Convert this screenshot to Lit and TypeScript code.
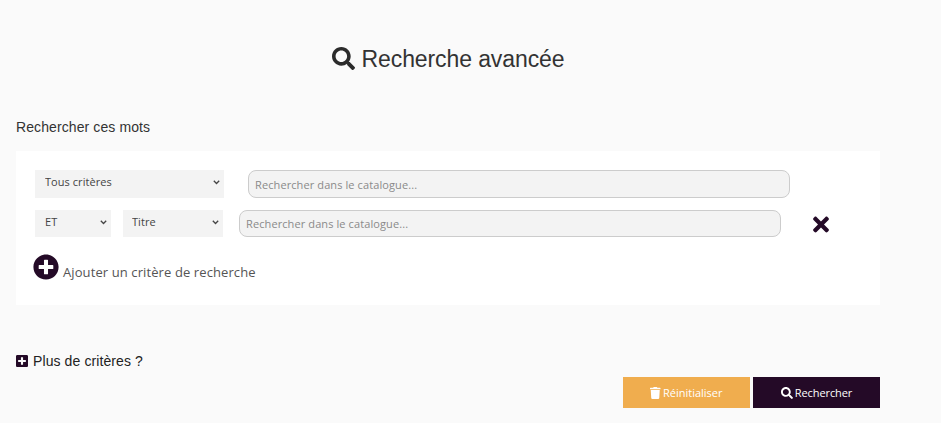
import { LitElement, html, css, svg } from "lit";
import { customElement } from "lit/decorators.js";

const SEARCH = "M505 442.7L405.3 343c-4.5-4.5-10.6-7-17-7H372c27.6-35.3 44-79.7 44-128C416 93.1 322.9 0 208 0S0 93.1 0 208s93.1 208 208 208c48.3 0 92.7-16.4 128-44v16.3c0 6.4 2.5 12.5 7 17l99.7 99.7c9.4 9.4 24.6 9.4 33.9 0l28.3-28.3c9.4-9.4 9.4-24.6.1-34zM208 336c-70.7 0-128-57.2-128-128 0-70.7 57.2-128 128-128 70.7 0 128 57.2 128 128 0 70.7-57.2 128-128 128z";
const TIMES = "M242.72 256l100.07-100.07c12.28-12.28 12.28-32.19 0-44.48l-22.24-22.24c-12.28-12.28-32.19-12.28-44.48 0L176 189.28 75.93 89.21c-12.28-12.28-32.19-12.28-44.48 0L9.21 111.45c-12.28 12.28-12.28 32.19 0 44.48L109.28 256 9.21 356.07c-12.28 12.28-12.28 32.19 0 44.48l22.24 22.24c12.28 12.28 32.2 12.28 44.48 0L176 322.72l100.07 100.07c12.28 12.28 32.2 12.28 44.48 0l22.24-22.24c12.28-12.28 12.28-32.19 0-44.48L242.72 256z";
const PLUS_CIRCLE = "M256 8C119 8 8 119 8 256s111 248 248 248 248-111 248-248S393 8 256 8zm144 276c0 6.6-5.4 12-12 12h-92v92c0 6.6-5.4 12-12 12h-56c-6.6 0-12-5.4-12-12v-92h-92c-6.6 0-12-5.4-12-12v-56c0-6.6 5.4-12 12-12h92v-92c0-6.6 5.4-12 12-12h56c6.6 0 12 5.4 12 12v92h92c6.6 0 12 5.4 12 12v56z";
const PLUS_SQUARE = "M400 32H48C21.5 32 0 53.5 0 80v352c0 26.5 21.5 48 48 48h352c26.5 0 48-21.5 48-48V80c0-26.5-21.5-48-48-48zm-32 252c0 6.6-5.4 12-12 12h-92v92c0 6.6-5.4 12-12 12h-56c-6.6 0-12-5.4-12-12v-92H92c-6.6 0-12-5.4-12-12v-56c0-6.6 5.4-12 12-12h92v-92c0-6.6 5.4-12 12-12h56c6.6 0 12 5.4 12 12v92h92c6.6 0 12 5.4 12 12v56z";
const TRASH = "M432 32H312l-9.4-18.7A24 24 0 0 0 281.1 0H166.8a23.72 23.72 0 0 0-21.4 13.3L136 32H16A16 16 0 0 0 0 48v32a16 16 0 0 0 16 16h416a16 16 0 0 0 16-16V48a16 16 0 0 0-16-16zM53.2 467a48 48 0 0 0 47.9 45h245.8a48 48 0 0 0 47.9-45L416 128H32z";

const icon = (d: string, w: number, cls: string) =>
  html`<svg class=${cls} viewBox="0 0 ${w} 512" aria-hidden="true">${svg`<path d=${d} fill="currentColor"></path>`}</svg>`;

const chevron = html`<svg class="chev" viewBox="0 0 7 5" aria-hidden="true">${svg`<path d="M.8.8 3.5 3.5 6.2.8" fill="none" stroke="currentColor" stroke-width="1.3"></path>`}</svg>`;

const dropdown = (label: string, cls: string) => html`
  <div class="sel ${cls}">
    <select><option>${label}</option></select>
    ${chevron}
  </div>
`;

@customElement("app-root")
export class AppRoot extends LitElement {
  static styles = css`
    :host {
      display: block;
      width: 941px;
      height: 423px;
      overflow: hidden;
      background: #fafafa;
      font-family: "Liberation Sans", Arial, sans-serif;
      color: #333;
      box-sizing: border-box;
    }
    .page {
      width: 864px;
      margin-left: 16px;
      padding-top: 41px;
      display: flex;
      flex-direction: column;
    }
    h1 {
      margin: 0;
      height: 36px;
      display: flex;
      align-items: center;
      justify-content: center;
      gap: 7px;
      font-size: 23px;
      letter-spacing: -0.1px;
      font-weight: 400;
      line-height: 36px;
      color: #333;
    }
    .h-icon {
      width: 23px;
      height: 23px;
      margin-top: -2px;
      color: #2b2b2b;
    }
    .label {
      margin-top: 40px;
      font-size: 14px;
      letter-spacing: 0.1px;
      line-height: 20px;
      color: #333;
    }
    .panel {
      margin-top: 14px;
      height: 154px;
      box-sizing: border-box;
      background: #fff;
      padding: 19px 0 0 19px;
      display: flex;
      flex-direction: column;
    }
    .row {
      display: flex;
      align-items: center;
    }
    .row2 {
      margin-top: 12px;
    }
    .sel {
      position: relative;
      color: #444;
    }
    select {
      appearance: none;
      display: block;
      width: 100%;
      height: 100%;
      border: none;
      border-radius: 0;
      background-color: #f3f3f3;
      font-family: "Open Sans", sans-serif;
      font-size: 11px;
      letter-spacing: 0.05px;
      color: #444;
      padding: 0 0 5px 10px;
      outline: none;
      box-sizing: border-box;
    }
    .s-field select { padding-left: 9px; }
    .chev {
      position: absolute;
      right: 4px;
      top: 10px;
      width: 7px;
      height: 5px;
    }
    .s-all { width: 189px; height: 28px; }
    .s-op { width: 76px; height: 27px; margin-right: 12px; }
    .s-field { width: 100px; height: 27px; }
    input {
      box-sizing: border-box;
      width: 542px;
      background: #f3f3f3;
      border: 1px solid #ccc;
      border-radius: 8px;
      padding: 0 6px;
      font-family: "Open Sans", sans-serif;
      font-size: 11px;
      letter-spacing: 0.1px;
      color: #444;
      outline: none;
    }
    input::placeholder { color: #8a8a8a; opacity: 1; }
    .i-1 { height: 28px; margin-left: 24px; }
    .i-2 { height: 27px; margin-left: 16px; }
    .remove {
      width: 16px;
      height: 23px;
      margin-left: 32px;
      margin-top: 2px;
      color: #240a27;
    }
    .add {
      margin-top: 17px;
      margin-left: -2px;
      display: flex;
      align-items: flex-start;
      gap: 4px;
      font-family: "Open Sans", sans-serif;
      font-size: 13px;
      letter-spacing: 0.1px;
      line-height: 18px;
      color: #555;
    }
    .add-icon {
      width: 26px;
      height: 26px;
      color: #240a27;
    }
    .add span { margin-top: 9px; }
    .more {
      margin-top: 46px;
      display: flex;
      align-items: center;
      gap: 5px;
      font-size: 14px;
      letter-spacing: 0.1px;
      line-height: 20px;
      color: #222;
    }
    .more-icon {
      width: 12px;
      height: 14px;
      color: #240a27;
    }
    .actions {
      margin-top: 6px;
      display: flex;
      justify-content: flex-end;
      gap: 3px;
    }
    button {
      height: 31px;
      width: 127px;
      border: none;
      border-radius: 0;
      color: #fff;
      font-family: "Open Sans", sans-serif;
      font-size: 11px;
      display: flex;
      align-items: center;
      justify-content: center;
      gap: 2px;
      padding: 0;
    }
    .btn-trash { width: 10.5px; height: 12px; }
    .btn-search { width: 12px; height: 12px; }
    .reset { background: #f0ad4e; }
    .go { background: #240a27; letter-spacing: -0.1px; }
  `;

  render() {
    return html`
      <div class="page">
        <h1>${icon(SEARCH, 512, "h-icon")}Recherche avancée</h1>
        <div class="label">Rechercher ces mots</div>
        <div class="panel">
          <div class="row">
            ${dropdown("Tous critères", "s-all")}
            <input class="i-1" placeholder="Rechercher dans le catalogue..." />
          </div>
          <div class="row row2">
            ${dropdown("ET", "s-op")}
            ${dropdown("Titre", "s-field")}
            <input class="i-2" placeholder="Rechercher dans le catalogue..." />
            ${icon(TIMES, 352, "remove")}
          </div>
          <div class="add">${icon(PLUS_CIRCLE, 512, "add-icon")}<span>Ajouter un critère de recherche</span></div>
        </div>
        <div class="more">${icon(PLUS_SQUARE, 448, "more-icon")}Plus de critères ?</div>
        <div class="actions">
          <button class="reset">${icon(TRASH, 448, "btn-trash")}Réinitialiser</button>
          <button class="go">${icon(SEARCH, 512, "btn-search")}Rechercher</button>
        </div>
      </div>
    `;
  }
}
